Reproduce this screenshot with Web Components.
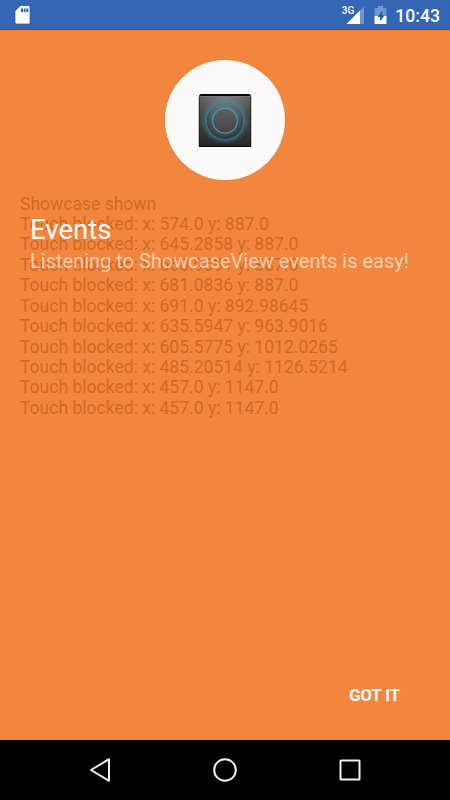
<!DOCTYPE html>
<html lang="en">
<head>
<meta charset="utf-8">
<title>Events</title>
<style>
    html, body {
        margin: 0;
        height: 100%;
    }
    body {
        font-family: Roboto, "Noto Sans", sans-serif;
        background: #000;
        overflow: hidden;
    }
</style>
</head>
<body>
<phone-screen>
    <status-bar slot="status" time="10:43" network="3G"></status-bar>
    <event-log slot="content">
        <log-line>Showcase shown</log-line>
        <log-line>Touch blocked: x: 574.0 y: 887.0</log-line>
        <log-line>Touch blocked: x: 645.2858 y: 887.0</log-line>
        <log-line>Touch blocked: x: 668.9691 y: 887.0</log-line>
        <log-line>Touch blocked: x: 681.0836 y: 887.0</log-line>
        <log-line>Touch blocked: x: 691.0 y: 892.98645</log-line>
        <log-line>Touch blocked: x: 635.5947 y: 963.9016</log-line>
        <log-line>Touch blocked: x: 605.5775 y: 1012.0265</log-line>
        <log-line>Touch blocked: x: 485.20514 y: 1126.5214</log-line>
        <log-line>Touch blocked: x: 457.0 y: 1147.0</log-line>
        <log-line>Touch blocked: x: 457.0 y: 1147.0</log-line>
    </event-log>
    <showcase-view slot="overlay">
        <span slot="title">Events</span>
        <span slot="detail">Listening to ShowcaseView events is easy!</span>
        <span slot="button">GOT IT</span>
    </showcase-view>
    <nav-bar slot="nav"></nav-bar>
</phone-screen>

<script>
class PhoneScreen extends HTMLElement {
    constructor() {
        super();
        this.attachShadow({mode: 'open'}).innerHTML = `
            <style>
                :host {
                    display: grid;
                    grid-template-rows: 30px 710px 60px;
                    width: 450px;
                    height: 800px;
                }
                main {
                    position: relative;
                    background: #f1873f;
                }
            </style>
            <slot name="status"></slot>
            <main>
                <slot name="content"></slot>
                <slot name="overlay"></slot>
            </main>
            <slot name="nav"></slot>
        `;
    }
}

class StatusBar extends HTMLElement {
    constructor() {
        super();
        this.attachShadow({mode: 'open'});
    }

    connectedCallback() {
        this.shadowRoot.innerHTML = `
            <style>
                :host {
                    display: flex;
                    align-items: stretch;
                    box-sizing: border-box;
                    height: 30px;
                    padding: 0 10px 0 14px;
                    background: #3367b5;
                    border-bottom: 1px solid #2b5ba0;
                    color: #fff;
                }
                svg {
                    display: block;
                }
                .signal {
                    display: flex;
                    margin-left: auto;
                }
                .network {
                    font-size: 10px;
                    font-weight: 500;
                    line-height: 12px;
                    padding-top: 5px;
                }
                .battery {
                    margin-left: 9px;
                }
                .time {
                    margin-left: 8px;
                    font-size: 17.6px;
                    font-weight: 500;
                    line-height: 32px;
                }
            </style>
            <svg width="18" height="29" viewBox="0 0 18 29">
                <path d="M6.500 5.500h8q1.500 0 1.500 1.500v15.500q0 1.500-1.500 1.500h-12q-1.500 0-1.500-1.500v-11.500z" fill="#fff" stroke="#1d55ad" stroke-width=".7"/>
                <path d="M7 8.500h2v3.500h-2zM9.800 8.500h1.700v3.500h-1.700zM12.300 8.500h2v3.500h-2z" fill="#2c5fc4"/>
            </svg>
            <div class="signal">
                <span class="network">${this.getAttribute('network')}</span>
                <svg width="11" height="29" viewBox="0 0 11 29" overflow="visible">
                    <path d="M10 6.500v17.500h-17.500z" fill="#fff" fill-opacity=".3"/>
                    <path d="M6 10.500v13.500h-13.500z" fill="#fff"/>
                </svg>
            </div>
            <svg class="battery" width="13" height="29" viewBox="0 0 13 29">
                <path d="M4 6h5v2h2.500q1 0 1 1v7h-12v-7q0-1 1-1h2.500z" fill="#fff" fill-opacity=".3"/>
                <path d="M.500 16h12v7q0 1-1 1h-10q-1 0-1-1z" fill="#fff"/>
                <path d="M8.500 10.500l-5 6.500h2.700v4.500l4.300-6.300h-2.500z" fill="#2455a0"/>
            </svg>
            <span class="time">${this.getAttribute('time')}</span>
        `;
    }
}

class EventLog extends HTMLElement {
    constructor() {
        super();
        this.attachShadow({mode: 'open'}).innerHTML = `
            <style>
                :host {
                    display: flex;
                    flex-direction: column;
                    padding: 163.500px 20px 0;
                    color: #d26a25;
                    font-size: 17.550px;
                    line-height: 20.440px;
                }
            </style>
            <slot></slot>
        `;
    }
}

class LogLine extends HTMLElement {
    constructor() {
        super();
        this.attachShadow({mode: 'open'}).innerHTML = `
            <style>
                :host {
                    display: block;
                    white-space: nowrap;
                }
            </style>
            <slot></slot>
        `;
    }
}

// Covers the content: spotlight at the top, text below it, button at the bottom.
class ShowcaseView extends HTMLElement {
    constructor() {
        super();
        this.attachShadow({mode: 'open'}).innerHTML = `
            <style>
                :host {
                    position: absolute;
                    inset: 0;
                    display: flex;
                    flex-direction: column;
                    box-sizing: border-box;
                    padding: 30px 30px 34px;
                    color: #fff;
                }
                .spotlight {
                    display: grid;
                    place-items: center;
                    align-self: center;
                    width: 120px;
                    height: 120px;
                    border-radius: 50%;
                    background: #fafafa;
                }
                .title {
                    margin-top: 33px;
                    font-size: 27.5px;
                    line-height: 34px;
                }
                .detail {
                    margin-top: 2px;
                    font-size: 20px;
                    line-height: 24px;
                    white-space: nowrap;
                    color: rgba(255, 255, 255, .6);
                }
                button {
                    margin: auto 20px 0 auto;
                    padding: 0;
                    border: 0;
                    background: none;
                    color: inherit;
                    font: 700 16.5px/21px Roboto, sans-serif;
                }
            </style>
            <div class="spotlight"><app-icon></app-icon></div>
            <div class="title"><slot name="title"></slot></div>
            <div class="detail"><slot name="detail"></slot></div>
            <button><slot name="button"></slot></button>
        `;
    }
}

class AppIcon extends HTMLElement {
    constructor() {
        super();
        this.attachShadow({mode: 'open'}).innerHTML = `
            <style>
                :host {
                    display: block;
                    width: 60px;
                    height: 60px;
                }
                svg {
                    display: block;
                }
            </style>
            <svg width="60" height="60" viewBox="0 0 60 60">
                <defs>
                    <linearGradient id="face" x1="0" y1="0" x2="0" y2="1">
                        <stop offset="0" stop-color="#585858"/>
                        <stop offset=".5" stop-color="#424242"/>
                        <stop offset="1" stop-color="#272727"/>
                    </linearGradient>
                    <radialGradient id="shine" cx=".5" cy="0" r=".6">
                        <stop offset="0" stop-color="#fff" stop-opacity=".25"/>
                        <stop offset="1" stop-color="#fff" stop-opacity="0"/>
                    </radialGradient>
                    <radialGradient id="glow" gradientUnits="userSpaceOnUse" cx="30" cy="30.700" r="24">
                        <stop offset=".5" stop-color="#3a8ba6" stop-opacity=".6"/>
                        <stop offset=".58" stop-color="#3a8ba6" stop-opacity=".3"/>
                        <stop offset=".68" stop-color="#3a8ba6" stop-opacity=".12"/>
                        <stop offset=".75" stop-color="#3a8ba6" stop-opacity=".12"/>
                        <stop offset=".77" stop-color="#3a8ba6" stop-opacity=".65"/>
                        <stop offset=".88" stop-color="#3a8ba6" stop-opacity=".3"/>
                        <stop offset="1" stop-color="#3a8ba6" stop-opacity="0"/>
                    </radialGradient>
                    <linearGradient id="core" x1="0" y1="0" x2="0" y2="1">
                        <stop offset="0" stop-color="#606060"/>
                        <stop offset="1" stop-color="#434343"/>
                    </linearGradient>
                </defs>
                <path d="M5.500 4h49l1.700 2v51h-52.400v-51z" fill="#080808"/>
                <path d="M4.500 6h51v50h-51z" fill="url(#face)"/>
                <path d="M4.500 6h51v50h-51z" fill="url(#shine)"/>
                <path d="M4.500 6.500h51" stroke="#777"/>
                <circle cx="30" cy="30.700" r="24" fill="url(#glow)"/>
                <circle cx="30" cy="30.700" r="12.300" fill="url(#core)" stroke="#4496b2" stroke-width="1.200"/>
            </svg>
        `;
    }
}

class NavBar extends HTMLElement {
    constructor() {
        super();
        this.attachShadow({mode: 'open'}).innerHTML = `
            <style>
                :host {
                    display: flex;
                    align-items: center;
                    justify-content: center;
                    gap: 95px;
                    height: 60px;
                    background: #000;
                }
                svg {
                    width: 30px;
                    height: 30px;
                    fill: none;
                    stroke: #f0f0f0;
                    stroke-width: 2;
                    stroke-linejoin: round;
                }
            </style>
            <svg viewBox="0 0 30 30"><path d="M6 15l18-10.800v21.600z" transform="translate(0 0)"/></svg>
            <svg viewBox="0 0 30 30"><circle cx="15" cy="15" r="10.800"/></svg>
            <svg viewBox="0 0 30 30"><rect x="5.500" y="5.500" width="19" height="19" rx=".5"/></svg>
        `;
    }
}

customElements.define('phone-screen', PhoneScreen);
customElements.define('status-bar', StatusBar);
customElements.define('event-log', EventLog);
customElements.define('log-line', LogLine);
customElements.define('app-icon', AppIcon);
customElements.define('showcase-view', ShowcaseView);
customElements.define('nav-bar', NavBar);
</script>
</body>
</html>
